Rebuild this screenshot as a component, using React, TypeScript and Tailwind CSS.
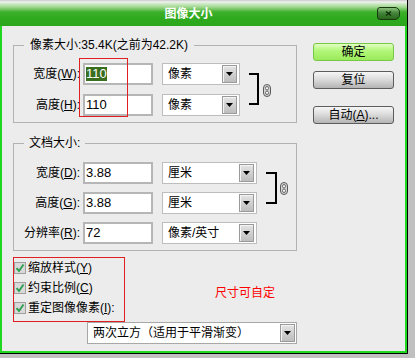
import type { ReactNode } from 'react'

const ui = "font-['Liberation_Sans','Noto_Sans_CJK_SC',sans-serif]"

function DropBtn() {
  return (
    <span className="flex h-[18px] w-[15px] shrink-0 items-center justify-center border border-[#9a9a9a] bg-[linear-gradient(#e4e4e4,#bdbdbd)] shadow-[inset_1px_1px_0_#f4f4f4]">
      <svg width="7" height="4" viewBox="0 0 7 4">
        <path d="M0 0h7L3.5 4z" fill="#000" />
      </svg>
    </span>
  )
}

function Select({ text, className }: { text: string; className: string }) {
  return (
    <div className={`flex h-[22px] items-center justify-between border border-[#bdbdbd] bg-white pl-[5px] pr-[2px] ${className}`}>
      <span className="text-[12px] leading-[14px]">{text}</span>
      <DropBtn />
    </div>
  )
}

function Field({ value, selected }: { value: string; selected?: boolean }) {
  return (
    <div className="flex h-[22px] w-[70px] items-center border-2 border-[#b6b6b6] bg-white pl-[1px] text-[13px] leading-[14px]">
      {selected ? <span className="bg-[#3a6e1f] text-white">{value}</span> : <span>{value}</span>}
    </div>
  )
}

function Row({ label, value, unit, selectW, selected }: { label: ReactNode; value: string; unit: string; selectW: string; selected?: boolean }) {
  return (
    <div className="flex h-[22px] items-center">
      <div className="w-[69px] pr-[3px] text-right text-[12px] leading-[14px]">{label}</div>
      <Field value={value} selected={selected} />
      <Select text={unit} className={`ml-[9px] ${selectW}`} />
    </div>
  )
}

// little chain link between the bracketed fields
function Chain({ className }: { className: string }) {
  return (
    <svg className={className} width="8" height="13" viewBox="0 0 8 13">
      <rect x="0.5" y="0.5" width="7" height="12" rx="3.5" fill="#d6d6d6" stroke="#5a5a5a" />
      <rect x="2.5" y="2.5" width="3" height="3.5" rx="1.5" fill="#f4f4f4" stroke="#6a6a6a" />
      <rect x="2.5" y="7" width="3" height="3.5" rx="1.5" fill="#f4f4f4" stroke="#6a6a6a" />
    </svg>
  )
}

function Check({ children }: { children: ReactNode }) {
  return (
    <div className="flex h-[20px] items-center">
      <span className="flex h-[12px] w-[12px] items-center justify-center border border-[#a0a0a0] bg-[#d9d9d9]">
        <svg width="10" height="10" viewBox="0 0 10 10">
          <path d="M1.5 5.2 L4 8 L8.5 1.5" stroke="#2f9f52" strokeWidth="2" fill="none" />
        </svg>
      </span>
      <span className="ml-[2px] text-[12px] leading-[14px]">{children}</span>
    </div>
  )
}

function Btn({ children, green, className }: { children: ReactNode; green?: boolean; className?: string }) {
  const skin = green
    ? 'border-[#78c848] bg-[linear-gradient(#e2ffc4,#b4f77c_40%,#9aea5a)]'
    : 'border-[#5c5c5c] bg-[linear-gradient(#f6f6f6,#dcdcdc_45%,#b4b4b4)]'
  return (
    <div className={`flex h-[18px] items-center justify-center rounded-[3px] border text-[12px] leading-[14px] ${skin} ${className ?? ''}`}>
      {children}
    </div>
  )
}

export default function App() {
  return (
    <div className={`h-[358px] w-[415px] bg-[#c0c0c0] text-black ${ui}`}>
      <div className="flex h-[354px] w-[408px] flex-col border-b border-r border-black bg-[#ececec]">
        {/* title bar */}
        <div className="flex h-[26px] shrink-0 items-center bg-[linear-gradient(180deg,#c8c8c8_0px,#f2f2f2_2px,#d8eed2_3px,#a2d890_7px,#3eb02c_12px,#2faa1f_18px,#2ca71c_26px)]">
          <div className="flex flex-1 justify-center pt-[2px] text-[12px] font-bold leading-[14px] text-white">图像大小</div>
          <div className="mr-[7px] mt-[1px] flex h-[13px] w-[23px] items-center justify-center rounded-[3px] rounded-r-[5px] border border-[#16380f] bg-[linear-gradient(#8cbf7c,#44853a_45%,#2a681c)]">
            <svg width="7" height="5" viewBox="0 0 7 5">
              <path d="M1 0.5 L6 4.5 M6 0.5 L1 4.5" stroke="#10300c" strokeWidth="1.4" />
            </svg>
          </div>
        </div>

        <div className="flex flex-1 border-x-2 border-b-2 border-[#1fd81f] px-[11px]">
          {/* left column */}
          <div className="w-[284px] pt-[11px]">
            <fieldset className="border border-[#b2b2b2] px-0 pb-[6px] pt-[10px]">
              <legend className="ml-[10px] px-[6px] text-[12px] leading-[16px]">像素大小:35.4K(之前为42.2K)</legend>
              <div className="flex items-start">
                <div className="relative flex flex-col gap-[9px]">
                  <Row label={<>宽度(<span className="underline">W</span>):</>} value="110" unit="像素" selectW="w-[78px]" selected />
                  <Row label={<>高度(<span className="underline">H</span>):</>} value="110" unit="像素" selectW="w-[78px]" />
                  <div className="absolute left-[65px] top-[-5px] h-[59px] w-[49px] border border-[#e02020]" />
                </div>
                <div className="ml-[9px] mt-[10px] h-[32px] w-[10px] border-y-2 border-r-2 border-black" />
                <Chain className="ml-[4px] mt-[21px]" />
              </div>
            </fieldset>

            <fieldset className="mt-[12px] border border-[#b2b2b2] px-0 pb-[6px] pt-[11px]">
              <legend className="ml-[10px] px-[5px] text-[12px] leading-[16px]">文档大小:</legend>
              <div className="flex items-start">
                <div className="flex flex-col gap-[8px]">
                  <Row label={<>宽度(<span className="underline">D</span>):</>} value="3.88" unit="厘米" selectW="w-[95px]" />
                  <Row label={<>高度(<span className="underline">G</span>):</>} value="3.88" unit="厘米" selectW="w-[95px]" />
                </div>
                <div className="ml-[9px] mt-[10px] h-[32px] w-[11px] border-y-2 border-r-2 border-black" />
                <Chain className="ml-[3px] mt-[20px]" />
              </div>
              <div className="mt-[8px]">
                <Row label={<>分辨率(<span className="underline">R</span>):</>} value="72" unit="像素/英寸" selectW="w-[95px]" />
              </div>
            </fieldset>

            <div className="mt-[6px] flex items-start">
              <div className="w-[112px] border border-[#e02020] pb-[3px]">
                <Check>缩放样式(<span className="underline">Y</span>)</Check>
                <Check>约束比例(<span className="underline">C</span>)</Check>
                <Check>重定图像像素(<span className="underline">I</span>):</Check>
              </div>
              <span className="ml-[90px] mt-[28px] text-[12px] leading-[16px] text-[#ff0000]">尺寸可自定</span>
            </div>

            <div className="ml-[74px] flex h-[22px] w-[210px] items-center justify-between border border-[#a8a8a8] bg-white pl-[5px] pr-[1px]">
              <span className="text-[12px] leading-[14px]">两次立方（适用于平滑渐变）</span>
              <DropBtn />
            </div>
          </div>

          {/* right column */}
          <div className="ml-[16px] flex w-[81px] flex-col pt-[17px]">
            <Btn green>确定</Btn>
            <Btn className="mt-[10px]">复位</Btn>
            <Btn className="mt-[17px]">自动(<span className="underline">A</span>)...</Btn>
          </div>
        </div>
      </div>
    </div>
  )
}
